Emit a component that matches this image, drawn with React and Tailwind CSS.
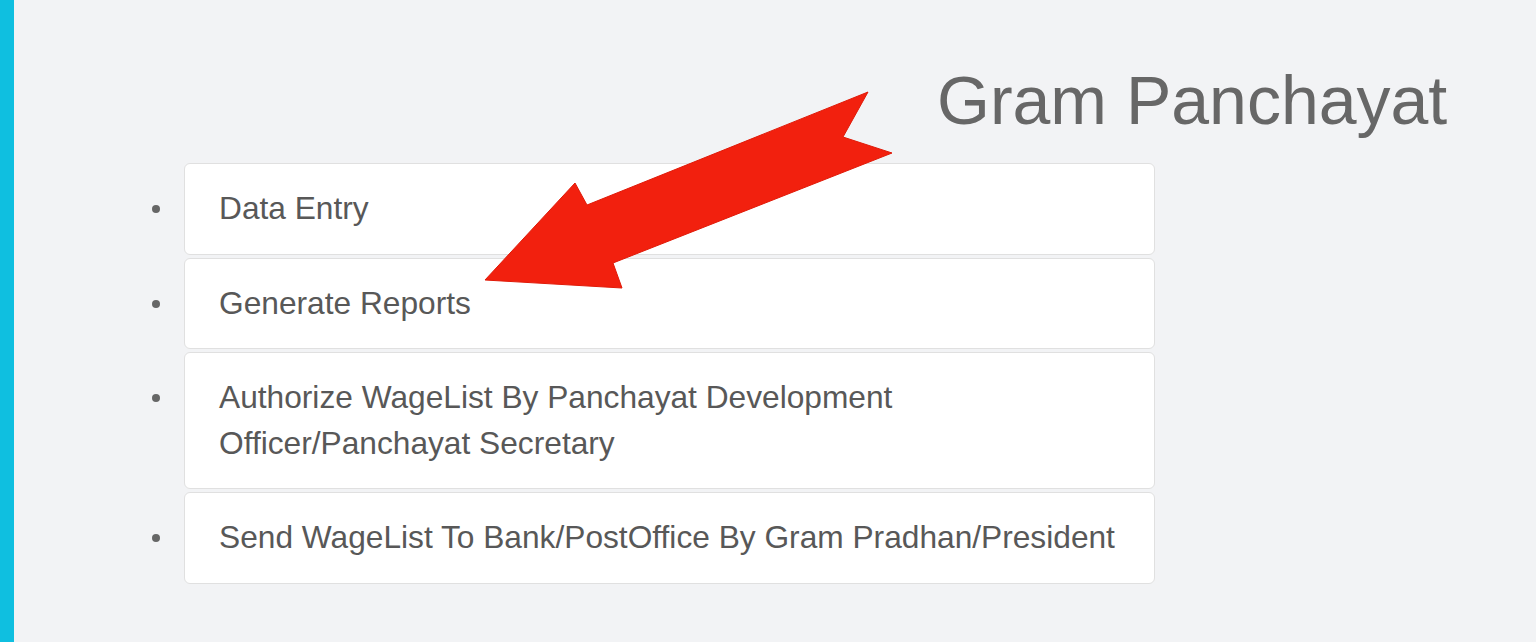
const items = [
  { key: 'data', label: 'Data Entry' },
  { key: 'reports', label: 'Generate Reports' },
  {
    key: 'authorize',
    label: (
      <>
        Authorize WageList By Panchayat Development{' '}
        <span className="whitespace-nowrap">Officer/Panchayat</span> Secretary
      </>
    ),
  },
  { key: 'send', label: 'Send WageList To Bank/PostOffice By Gram Pradhan/President' },
]

function Arrow() {
  return (
    <svg className="pointer-events-none absolute left-0 top-0" width="1536" height="642" viewBox="0 0 1536 642">
      <polygon
        points="868,92 843,137 892,153 613,263 622,288 485,280 575,183 587,205"
        fill="#f2200e"
        stroke="#e01a08"
        strokeWidth="1"
        strokeLinejoin="round"
      />
    </svg>
  )
}

export default function App() {
  return (
    <div className="relative flex h-[642px] w-full overflow-hidden bg-[#f2f3f5] font-['Liberation_Sans',Arial,sans-serif]">
      <div className="w-[14px] shrink-0 bg-[#0fbfe0]" />

      <main className="flex-1 pt-[66px]">
        <h1 className="pl-[923px] text-[68px] leading-[68px] font-normal text-[#676767]">Gram Panchayat</h1>

        <ul className="mt-[29px] ml-[138px] flex flex-col gap-[3px]">
          {items.map((item) => (
            <li key={item.key} className="flex items-start gap-[24px]">
              <span className="mt-[42px] h-[8px] w-[8px] shrink-0 rounded-full bg-[#666666]" />
              <div className="w-[971px] rounded-md border border-[#e0e0e0] bg-white py-[22px] pr-[30px] pl-[34px] text-[31.7px] leading-[45.5px] text-[#585858]">
                {item.label}
              </div>
            </li>
          ))}
        </ul>
      </main>

      <Arrow />
    </div>
  )
}
